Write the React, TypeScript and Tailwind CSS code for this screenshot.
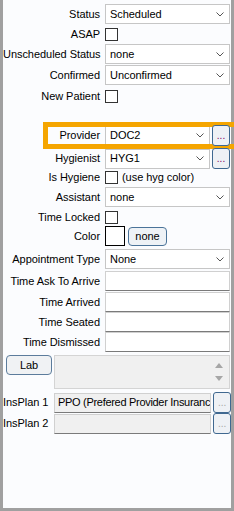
import React from "react";

const F = "font-['Liberation_Sans',Arial,sans-serif] text-[11px] tracking-[-0.05px] text-black leading-none";

function Chevron() {
  return (
    <svg width="8" height="5" viewBox="0 0 8 5" className="shrink-0">
      <path d="M0.5 0.5 L4 4 L7.5 0.5" stroke="#555" fill="none" strokeWidth="1" />
    </svg>
  );
}

function Combo({ value, wide = true }: { value: string; wide?: boolean }) {
  return (
    <div
      className={`${wide ? "w-[125px]" : "w-[105px]"} h-[20px] ml-[5px] bg-white border border-[#c6c6c6] flex items-center pl-[4px] pr-[5px] justify-between`}
    >
      <span className="text-black">{value}</span>
      <Chevron />
    </div>
  );
}

function Check() {
  return <div className="ml-[5px] w-[13px] h-[13px] bg-white border border-[#333] shrink-0" />;
}

function Label({ text }: { text: string }) {
  return <div className="w-[97px] shrink-0 text-right whitespace-nowrap">{text}</div>;
}

function Dots({ disabled = false }: { disabled?: boolean }) {
  return (
    <div className="relative z-20 ml-[2px] w-[18px] h-[21px] rounded-[3px] border border-[#3f6890] bg-[#eef1f5] flex items-end justify-center pb-[4px]">
      <span className={`${disabled ? "text-[#a8a8a8]" : "text-[#800060]"} text-[10px] leading-none tracking-[0px]`}>...</span>
    </div>
  );
}

function TextBox({ gray = false, value = "", w = "w-[125px]" }: { gray?: boolean; value?: string; w?: string }) {
  return (
    <div
      className={`${w} h-[20px] ${gray ? "bg-[#f0f0f0]" : "bg-white"} border border-[#d0d0d0] border-b-[#7a7a7a] flex items-center pl-[3px] overflow-hidden whitespace-nowrap tracking-[-0.3px]`}
    >
      {value}
    </div>
  );
}

export default function App() {
  return (
    <div className="w-[234px] h-[511px] bg-[#a0a0a0] pl-[3px] pr-[3px] pb-[3px] overflow-hidden">
      <div className={`relative w-full h-full bg-[#fbfcfe] ${F} overflow-visible`}>
        {/* highlight overlay */}
        <div className="absolute z-10 left-[40px] top-[122px] w-[220px] h-[27px] border-[5px] border-[#f5a500] pointer-events-none" />

        <div className="flex flex-col">
          <div className="flex items-center mt-[4px]">
            <Label text="Status" />
            <Combo value="Scheduled" />
          </div>
          <div className="flex items-center mt-[4px] h-[13px]">
            <Label text="ASAP" />
            <Check />
          </div>
          <div className="flex items-center mt-[3px]">
            <Label text="Unscheduled Status" />
            <Combo value="none" />
          </div>
          <div className="flex items-center mt-[1px]">
            <Label text="Confirmed" />
            <Combo value="Unconfirmed" />
          </div>
          <div className="flex items-center mt-[5px] h-[13px]">
            <Label text="New Patient" />
            <Check />
          </div>

          <div className="flex items-center mt-[22px]">
            <Label text="Provider" />
            <Combo value="DOC2" wide={false} />
            <Dots />
          </div>
          <div className="flex items-center mt-[2px]">
            <Label text="Hygienist" />
            <Combo value="HYG1" wide={false} />
            <Dots />
          </div>
          <div className="flex items-center mt-[2px] h-[13px]">
            <Label text="Is Hygiene" />
            <Check />
            <span className="ml-[4px] whitespace-nowrap">(use hyg color)</span>
          </div>
          <div className="flex items-center mt-[3px]">
            <Label text="Assistant" />
            <Combo value="none" />
          </div>
          <div className="flex items-center mt-[4px] h-[13px]">
            <Label text="Time Locked" />
            <Check />
          </div>
          <div className="flex items-center mt-[2px] h-[20px]">
            <Label text="Color" />
            <div className="ml-[5px] w-[20px] h-[20px] bg-white border border-black" />
            <div className="ml-[3px] w-[39px] h-[19px] rounded-[4px] border border-[#4a7399] bg-[#eef2f6] flex items-center justify-center">
              none
            </div>
          </div>
          <div className="flex items-center mt-[3px]">
            <Label text="Appointment Type" />
            <Combo value="None" />
          </div>
          <div className="flex items-center mt-[2px]">
            <Label text="Time Ask To Arrive" />
            <div className="ml-[5px]"><TextBox /></div>
          </div>
          <div className="flex items-center mt-[1px]">
            <Label text="Time Arrived" />
            <div className="ml-[5px]"><TextBox /></div>
          </div>
          <div className="flex items-center mt-[0px]">
            <Label text="Time Seated" />
            <div className="ml-[5px]"><TextBox /></div>
          </div>
          <div className="flex items-center mt-[0px]">
            <Label text="Time Dismissed" />
            <div className="ml-[5px]"><TextBox /></div>
          </div>

          <div className="flex items-start mt-[3px] pl-[3px]">
            <div className="w-[46px] h-[20px] rounded-[4px] border border-[#5c7c9c] bg-[#f0f2f4] flex items-center justify-center">
              Lab
            </div>
            <div className="ml-[2px] w-[176px] h-[34px] bg-[#f0f0f0] border border-[#d4d4d4] flex justify-end pr-[6px]">
              <div className="flex flex-col justify-between py-[7px]">
                <svg width="8" height="5" viewBox="0 0 8 5"><path d="M0 5 L4 0 L8 5 Z" fill="#a6a6a6" /></svg>
                <svg width="8" height="5" viewBox="0 0 8 5"><path d="M0 0 L4 5 L8 0 Z" fill="#a6a6a6" /></svg>
              </div>
            </div>
          </div>

          <div className="flex items-center mt-[3px]">
            <div className="w-[51px] shrink-0 whitespace-nowrap">InsPlan 1</div>
            <TextBox gray value="PPO (Prefered Provider Insuranc" w="w-[158px]" />
            <Dots disabled />
          </div>
          <div className="flex items-center mt-[0px]">
            <div className="w-[51px] shrink-0 whitespace-nowrap">InsPlan 2</div>
            <TextBox gray w="w-[158px]" />
            <Dots disabled />
          </div>
        </div>
      </div>
    </div>
  );
}
